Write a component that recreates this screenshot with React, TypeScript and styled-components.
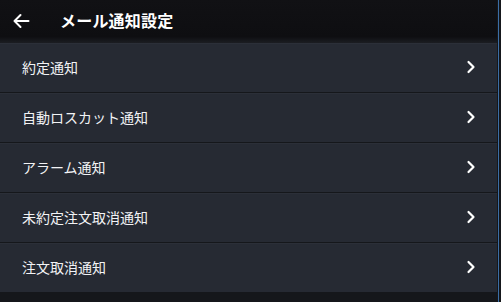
import * as React from 'react';
import styled, { createGlobalStyle } from 'styled-components';

const GlobalStyle = createGlobalStyle`
  html, body {
    margin: 0;
    padding: 0;
    background: #15171b;
  }
  body {
    font-family: "Noto Sans CJK JP", "Noto Sans", sans-serif;
  }
`;

const ITEMS = ['約定通知', '自動ロスカット通知', 'アラーム通知', '未約定注文取消通知', '注文取消通知'];

const Frame = styled.div`
  width: 501px;
  height: 302px;
  display: flex;
  overflow: hidden;
  background: #15171b;
`;

const Screen = styled.div`
  width: 497px;
  display: flex;
  flex-direction: column;
`;

const EdgeLine = styled.div`
  width: 1px;
  margin-left: 1px;
  background: #3b6ea6;
`;

const Header = styled.header`
  height: 43px;
  flex: none;
  display: flex;
  align-items: center;
  background: linear-gradient(#111114, #0e0e11 85%, #1b1d22);
`;

const BackButton = styled.button`
  width: 44px;
  height: 43px;
  padding: 0 0 2px 12px;
  border: 0;
  background: none;
  display: flex;
  align-items: center;
  color: #ffffff;
  cursor: pointer;
`;

const Title = styled.h1`
  margin: 0 0 3px 16px;
  font-size: 16px;
  font-weight: 700;
  color: #ffffff;
  letter-spacing: 0.2px;
`;

const List = styled.ul`
  margin: 0;
  padding: 0;
  list-style: none;
`;

const Row = styled.li`
  height: 48px;
  box-sizing: border-box;
  height: 50px;
  display: flex;
  align-items: center;
  justify-content: space-between;
  padding: 0 21px 3px 22px;
  background: #262a33;
  border-top: 1px solid #2b2f38;
  border-bottom: 1px solid #15171b;
  cursor: pointer;
`;

const Label = styled.span`
  font-size: 14px;
  color: #f2f3f5;
`;

const Chevron = () => (
  <svg width="10" height="14" viewBox="0 0 10 14" fill="none">
    <path d="M2.5 2 L7.5 7 L2.5 12" stroke="#ffffff" strokeWidth="2.2" strokeLinecap="round" strokeLinejoin="round" />
  </svg>
);

const BackArrow = () => (
  <svg width="18" height="16" viewBox="0 0 18 16" fill="none">
    <path d="M16.5 8 H2.5 M8.5 2 L2.5 8 L8.5 14" stroke="#ffffff" strokeWidth="2" strokeLinecap="round" strokeLinejoin="round" />
  </svg>
);

export default function App() {
  return (
    <>
      <GlobalStyle />
      <Frame>
        <Screen>
          <Header>
            <BackButton aria-label="戻る">
              <BackArrow />
            </BackButton>
            <Title>メール通知設定</Title>
          </Header>
          <List>
            {ITEMS.map((item) => (
              <Row key={item}>
                <Label>{item}</Label>
                <Chevron />
              </Row>
            ))}
          </List>
        </Screen>
        <EdgeLine />
      </Frame>
    </>
  );
}
